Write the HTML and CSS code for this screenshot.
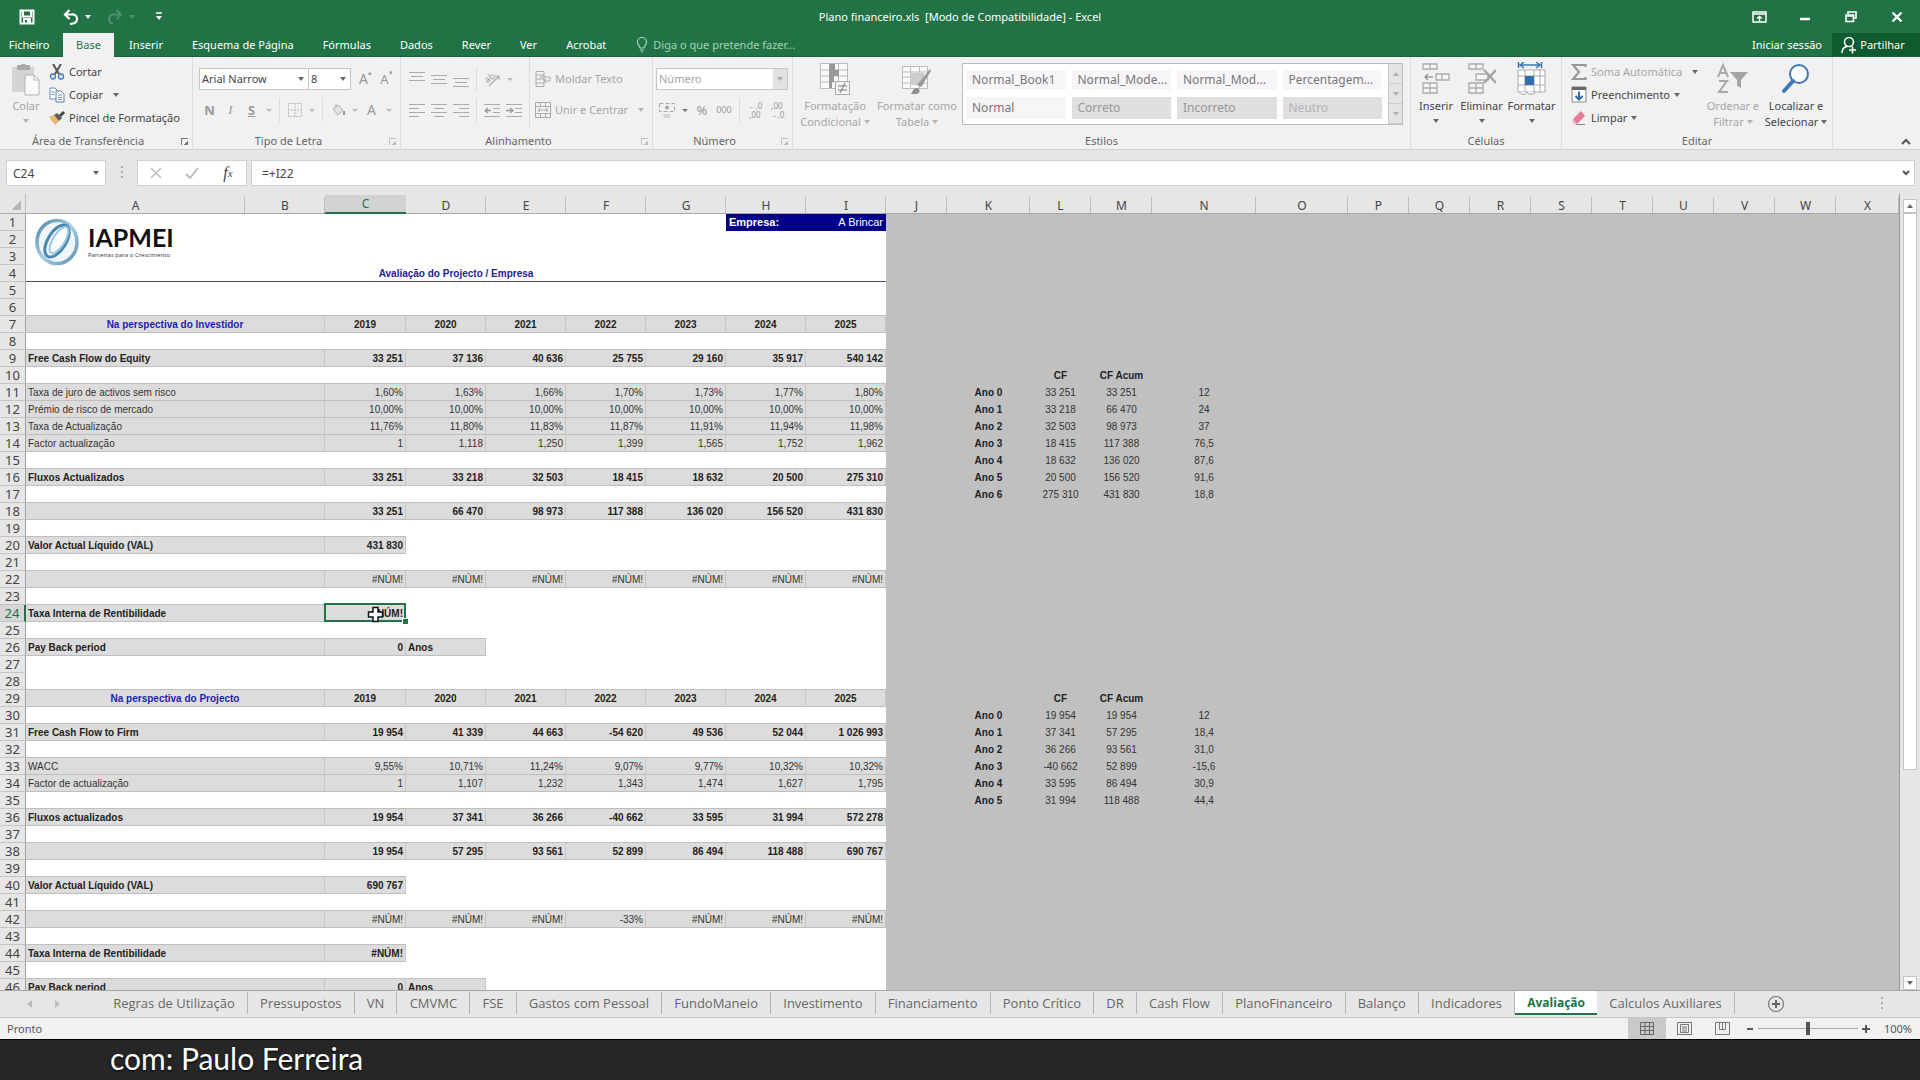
FILE: index.html
```html
<!DOCTYPE html>
<html lang="pt">
<head>
<meta charset="utf-8">
<title>Plano financeiro.xls - Excel</title>
<link rel="stylesheet" href="styles.css">
</head>
<body>
<header class="top">
  <div class="titlebar">
    <div class="quick">
      <button class="q-save" aria-label="Guardar"><svg width="16" height="16" viewBox="0 0 16 16"><path d="M1.500 1.500h13v13h-13z M4 1.500v6h8v-6 M5 14v-4h6v4" fill="none" stroke="#fff" stroke-width="2"/><path d="M8 11h2v3H8z" fill="#fff"/></svg></button>
      <button class="q-undo" aria-label="Anular"><svg width="16" height="16" viewBox="0 0 16 16"><path d="M2 5.500h7a4.500 4.500 0 0 1 1 9l-3 .5M6.500 1L2 5.500l4.500 4.500" fill="none" stroke="#fff" stroke-width="2.200"/></svg><i class="ar"></i></button>
      <button class="q-redo" aria-label="Refazer"><svg width="16" height="16" viewBox="0 0 16 16"><path d="M14 5.500H7a4.500 4.500 0 0 0-1 9M9.500 1L14 5.500 9.500 10" fill="none" stroke="#fff" stroke-width="2"/></svg><i class="ar"></i></button>
      <button class="q-more" aria-label="Personalizar"><svg width="8" height="9" viewBox="0 0 8 9"><path d="M1 1h6" stroke="#fff" stroke-width="1.500"/><path d="M1 4h6L4 8z" fill="#fff"/></svg></button>
    </div>
    <h1>Plano financeiro.xls&nbsp; [Modo de Compatibilidade] - Excel</h1>
    <div class="winctl">
      <button aria-label="Opções do friso"><svg width="15" height="12" viewBox="0 0 15 12"><path d="M1 1h13v10H1z M1 3h13 M7.500 10V5.500 M5 7.500l2.500-2 2.500 2" fill="none" stroke="#fff" stroke-width="1.500"/></svg></button>
      <button aria-label="Minimizar"><svg width="10" height="12" viewBox="0 0 10 12"><path d="M0 8h10" stroke="#fff" stroke-width="2.500"/></svg></button>
      <button aria-label="Restaurar"><svg width="12" height="12" viewBox="0 0 12 12"><path d="M3 3V1h8v6H9 M1 4h7.500v6.500H1z M1 5h7" fill="none" stroke="#fff" stroke-width="1.600"/></svg></button>
      <button aria-label="Fechar"><svg width="12" height="12" viewBox="0 0 12 12"><path d="M1.500 1.500l9 9M10.500 1.500l-9 9" stroke="#fff" stroke-width="2.400"/></svg></button>
    </div>
  </div>
  <nav class="rtabs">
    <button class="file">Ficheiro</button><button class="on">Base</button><button>Inserir</button><button>Esquema de Página</button><button>Fórmulas</button><button>Dados</button><button>Rever</button><button>Ver</button><button>Acrobat</button>
    <button class="tell"><svg width="12" height="16" viewBox="0 0 12 16"><path d="M4 11C4 9 1.500 8 1.500 5a4.500 4.500 0 0 1 9 0c0 3-2.500 4-2.500 6z M4 13h4 M5 15h2" fill="none" stroke="#9fd5b5" stroke-width="1.200"/></svg>Diga o que pretende fazer...</button>
    <a class="signin" href="#">Iniciar sessão</a>
    <button class="share"><svg width="16" height="18" viewBox="0 0 16 18"><circle cx="8" cy="6" r="4.500" fill="none" stroke="#fff" stroke-width="1.600"/><path d="M1 17c0-4 2-6 5-6.500 M8 14h7 M11.500 10.500v7" fill="none" stroke="#fff" stroke-width="1.600"/></svg>Partilhar</button>
  </nav>
</header>

<section class="ribbon">
  <div class="group g-clip">
    <div class="body">
      <button class="big dim"><svg width="30" height="34" viewBox="0 0 30 34"><path d="M1 5h22v25H1z" fill="#d4d4d4"/><path d="M6 3h4a3 3 0 0 1 5 0h4v5H6z" fill="#a9a9a9"/><path d="M14 13h9l5 5v15H14z" fill="#fafafa" stroke="#b5b5b5"/><path d="M23 13v5h5" fill="none" stroke="#b5b5b5"/></svg><span>Colar</span><i class="ar"></i></button>
      <div class="stack">
        <button class="row"><svg width="16" height="16" viewBox="0 0 16 16"><path d="M4 0l6 10M12 0L6 10" stroke="#555" stroke-width="2"/><circle cx="4" cy="12.500" r="2.500" fill="none" stroke="#3f77b5" stroke-width="1.300"/><circle cx="12" cy="12.500" r="2.500" fill="none" stroke="#3f77b5" stroke-width="1.300"/></svg>Cortar</button>
        <button class="row"><svg width="16" height="16" viewBox="0 0 16 16"><path d="M1 1h5l2 2v9H1z M2.500 5h3 M2.500 7.500h3" fill="#fff" stroke="#6e8fb5"/><path d="M7 4h5l3 3v8H7z" fill="#fff" stroke="#5580b0"/><path d="M9 8h4M9 10.500h4M9 12.500h4" stroke="#6e8fb5"/></svg>Copiar<i class="ar far"></i></button>
        <button class="row"><svg width="16" height="16" viewBox="0 0 16 16"><path d="M0 7l6 8 4-4-5-6z" fill="#ebb965"/><path d="M5 5l3-2 5 5-3 3z" fill="#5b5b5b"/><path d="M10 5l4-4 2 2-4 4z" fill="#444"/></svg>Pincel de Formatação</button>
      </div>
    </div>
    <div class="foot">Área de Transferência<i class="launch"></i></div>
  </div>

  <div class="group g-font">
    <div class="body two">
      <div class="line">
        <label class="drop w110"><select aria-label="Tipo de letra"><option>Arial Narrow</option></select></label>
        <label class="drop w42"><select aria-label="Tamanho"><option>8</option></select></label>
        <button class="ib first big-a" aria-label="Aumentar">A<sup>▴</sup></button><button class="ib" aria-label="Diminuir">A<sup>▾</sup></button>
      </div>
      <div class="line">
        <button class="ib"><b>N</b></button><button class="ib"><i class="ser">I</i></button><button class="ib"><b><u>S</u></b></button><i class="da"></i><i class="vs"></i>
        <button class="ib" aria-label="Limites"><svg width="14" height="14" viewBox="0 0 14 14"><path d="M.5.500h13v13H.5z M7 0v14 M0 7h14" fill="none" stroke="#bbb" stroke-dasharray="2 1"/></svg></button><i class="da"></i><i class="vs"></i>
        <button class="ib" aria-label="Cor de preenchimento"><svg width="16" height="14" viewBox="0 0 16 14"><path d="M3 6l5-4 5 5-5 5z M6 4V1" fill="#e4e4e4" stroke="#aaa"/><path d="M14 8v4" stroke="#999" stroke-width="2"/></svg></button><i class="da"></i><button class="ib big-a">A</button><i class="da"></i>
      </div>
    </div>
    <div class="foot">Tipo de Letra<i class="launch off"></i></div>
  </div>

  <div class="group g-align">
    <div class="body">
      <div class="two al">
        <div class="line">
          <button class="ib" aria-label="Cima"><svg width="16" height="16" viewBox="0 0 16 16"><path d="M0 1.500h16M2 5.500h12M0 9.500h16" stroke="#aaa"/></svg></button><button class="ib" aria-label="Meio"><svg width="16" height="16" viewBox="0 0 16 16"><path d="M0 4.500h16M2 8.500h12M0 12.500h16" stroke="#aaa"/></svg></button><button class="ib" aria-label="Baixo"><svg width="16" height="16" viewBox="0 0 16 16"><path d="M0 7.500h16M2 11.500h12M0 15.500h16" stroke="#aaa"/></svg></button><i class="vs"></i>
          <button class="ib" aria-label="Orientação"><svg width="20" height="20" viewBox="0 0 20 20"><path d="M7 17L17 7M17 7v4M17 7h-4" fill="none" stroke="#aaa" stroke-width="1.200"/><text x="3" y="12" font-size="9" fill="#999" transform="rotate(-35 8 10)">ab</text></svg></button><i class="da"></i>
        </div>
        <div class="line">
          <button class="ib" aria-label="Esquerda"><svg width="16" height="14" viewBox="0 0 16 14"><path d="M0 1.500h16M0 5.500h10M0 9.500h16M0 13.500h10" stroke="#aaa"/></svg></button><button class="ib" aria-label="Centro"><svg width="16" height="14" viewBox="0 0 16 14"><path d="M0 1.500h16M3 5.500h10M0 9.500h16M3 13.500h10" stroke="#aaa"/></svg></button><button class="ib" aria-label="Direita"><svg width="16" height="14" viewBox="0 0 16 14"><path d="M0 1.500h16M6 5.500h10M0 9.500h16M6 13.500h10" stroke="#aaa"/></svg></button><i class="vs"></i>
          <button class="ib" aria-label="Diminuir avanço"><svg width="16" height="14" viewBox="0 0 16 14"><path d="M0 1.500h16M9 5.500h7M9 9.500h7M0 13.500h16" stroke="#aaa"/><path d="M7 7.500H1M4 5L1 7.500 4 10" fill="none" stroke="#999" stroke-width="1.400"/></svg></button><button class="ib" aria-label="Aumentar avanço"><svg width="16" height="14" viewBox="0 0 16 14"><path d="M0 1.500h16M9 5.500h7M9 9.500h7M0 13.500h16" stroke="#aaa"/><path d="M0 7.500h6M4 5l3 2.500L4 10" fill="none" stroke="#999" stroke-width="1.400"/></svg></button>
        </div>
      </div>
      <div class="two wrap">
        <button class="line dim"><svg width="16" height="17" viewBox="0 0 16 17"><path d="M1 .5h8v15H1z M1 4h8M1 8h8M1 12h8" fill="none" stroke="#aaa"/><path d="M5 6h10v4H9M11 8l-2 2 2 2" fill="none" stroke="#aaa"/></svg>Moldar Texto</button>
        <button class="line dim"><svg width="16" height="16" viewBox="0 0 16 16"><path d="M.5.500h15v15H.5z M0 4.500h16M0 11.500h16M5.500 0v4M10.500 0v4M5.500 12v4M10.500 12v4M3 8h10M5 6L3 8l2 2M11 6l2 2-2 2" fill="none" stroke="#aaa"/></svg>Unir e Centrar<i class="ar far"></i></button>
      </div>
    </div>
    <div class="foot">Alinhamento<i class="launch off"></i></div>
  </div>

  <div class="group g-num">
    <div class="body two">
      <div class="line"><label class="drop w132 dim"><select aria-label="Formato de número"><option>Número</option></select></label></div>
      <div class="line">
        <button class="ib" aria-label="Moeda"><svg width="17" height="15" viewBox="0 0 17 15"><path d="M.5.500h15v8H.5z" fill="none" stroke="#aaa" stroke-dasharray="4 2"/><circle cx="8" cy="4.500" r="2" fill="#aaa"/><path d="M4 12h8M5 14h6" stroke="#ccc" stroke-width="1.500"/></svg></button><i class="da dk"></i><button class="ib pct">%</button><button class="ib ths">000</button><i class="vs"></i>
        <button class="ib dec" aria-label="Mais casas">←,0<br>,00</button><button class="ib dec" aria-label="Menos casas">,00<br>→,0</button>
      </div>
    </div>
    <div class="foot">Número<i class="launch off"></i></div>
  </div>

  <div class="group g-style">
    <div class="body">
      <button class="big dim"><svg width="30" height="32" viewBox="0 0 30 32"><path d="M.5.500h27v25H.5z M9.500 0v26M18.500 0v26M0 7h28M0 13h28M0 19h28" fill="#fafafa" stroke="#bbb"/><path d="M9 1h6v6H9zM9 7h10v6H9zM9 13h5v6H9zM9 19h3v6H9z" fill="#999"/><path d="M15.500 18.500h14v13h-14z" fill="#f4f4f4" stroke="#aaa"/><path d="M18 23h9M18 27h9M25 20l-5 10" stroke="#777"/></svg><span>Formatação<br>Condicional <i class="ar"></i></span></button>
      <button class="big dim"><svg width="30" height="32" viewBox="0 0 30 32"><path d="M.5 3.500h25v22H.5z M8.500 3v23M17.500 3v23M0 9h26M0 14h26M0 20h26" fill="#fafafa" stroke="#bbb"/><path d="M8 10h14v12H8z" fill="#ccc"/><path d="M29 8l-10 16-4-2L28 6z" fill="#999"/><path d="M8 31c3 0 2-6 7-6 4 1 3 5 0 6z" fill="#8d8d8d"/></svg><span>Formatar como<br>Tabela <i class="ar"></i></span></button>
      <div class="gallery">
        <button>Normal_Book1</button><button>Normal_Mode...</button><button>Normal_Mod...</button><button class="pc">Percentagem...</button>
        <button>Normal</button><button class="sh">Correto</button><button class="sh">Incorreto</button><button class="sh nt">Neutro</button>
        <div class="gscroll"><button aria-label="Acima"><i class="ar up"></i></button><button aria-label="Abaixo"><i class="ar"></i></button><button aria-label="Mais"><i class="ar"></i></button></div>
      </div>
    </div>
    <div class="foot">Estilos</div>
  </div>

  <div class="group g-cells">
    <div class="body">
      <button class="big"><svg width="28" height="32" viewBox="0 0 28 32"><path d="M1 1h14v5H1zM8 1v5M1 20h14v10H1zM8 20v10M1 25h14M14 11h13v6H14zM20 11v6" fill="#f7f7f7" stroke="#aaa" stroke-width="1.300"/><path d="M11 14H3M6 11l-3 3 3 3" fill="none" stroke="#999" stroke-width="1.500"/></svg><span>Inserir</span><i class="ar"></i></button>
      <button class="big"><svg width="28" height="32" viewBox="0 0 28 32"><path d="M1 1h14v5H1zM8 1v5M1 20h14v10H1zM8 20v10M1 25h14M8 11h12v6H8z" fill="#f7f7f7" stroke="#aaa" stroke-width="1.300"/><path d="M16 7l12 13M28 7L16 20" stroke="#a5a5a5" stroke-width="2.500"/></svg><span>Eliminar</span><i class="ar"></i></button>
      <button class="big"><svg width="30" height="34" viewBox="0 0 30 34"><path d="M1.500 0v6M24.500 0v6M3 3h20M7 0L3 3l4 3M19 0l4 3-4 3" fill="none" stroke="#3f77b5" stroke-width="1.500"/><path d="M1 8h27v22H1zM1 14h27M1 23h27M8 8v22M17 8v22M23 8v22" fill="#fff" stroke="#aaa"/><path d="M8 14h9v9H8z" fill="#2f6fb0"/><path d="M3 30c1 3 6 3 7 0 1 3 7 3 8 0" fill="#fff" stroke="#999"/></svg><span>Formatar</span><i class="ar"></i></button>
    </div>
    <div class="foot">Células</div>
  </div>

  <div class="group g-edit">
    <div class="body">
      <div class="stack">
        <button class="row dim"><svg width="16" height="18" viewBox="0 0 16 18"><path d="M14.500 4V2H2l6 7-6 7h12.500v-2" fill="none" stroke="#999" stroke-width="2.200"/></svg>Soma Automática<i class="ar far dk"></i></button>
        <button class="row"><svg width="16" height="17" viewBox="0 0 16 17"><path d="M1 1h14v15H1z" fill="#fff" stroke="#888"/><path d="M1 1h14v3H1z" fill="#666"/><path d="M8 5.500v8M4.500 10L8 13.500 11.500 10" fill="none" stroke="#2f6fb0" stroke-width="2"/></svg>Preenchimento<i class="ar"></i></button>
        <button class="row"><svg width="16" height="16" viewBox="0 0 16 16"><path d="M2 9l8-8 4 5-8 8z" fill="#e27d94"/><path d="M2 9l4 5-2 1-3-3z" fill="#f3b7c3"/><path d="M5 14.500h9" stroke="#888"/></svg>Limpar<i class="ar"></i></button>
      </div>
      <button class="big dim"><svg width="32" height="32" viewBox="0 0 32 32"><path d="M1 14L6 2l5 12M3 10h6M2 18h8L2 29h9" fill="none" stroke="#a9a9a9" stroke-width="2"/><path d="M13 9h18l-7 8v8l-4-2v-6z" fill="#a5a5a5"/></svg><span>Ordenar e<br>Filtrar <i class="ar"></i></span></button>
      <button class="big"><svg width="30" height="32" viewBox="0 0 30 32"><circle cx="18" cy="11" r="9" fill="#fafafa" stroke="#3f77b5" stroke-width="2"/><path d="M12 18L3 28" stroke="#3f77b5" stroke-width="4" stroke-linecap="round"/></svg><span>Localizar e<br>Selecionar <i class="ar"></i></span></button>
    </div>
    <div class="foot">Editar</div>
  </div>
  <button class="collapse" aria-label="Fechar o friso"><svg width="10" height="7" viewBox="0 0 10 7"><path d="M1 6l4-4 4 4" fill="none" stroke="#555" stroke-width="2"/></svg></button>
</section>

<section class="formula">
  <div class="namebox"><input type="text" value="C24" aria-label="Caixa de nome"><i class="ar"></i></div>
  <i class="dots"></i>
  <div class="fx">
    <button aria-label="Cancelar"><svg width="12" height="12" viewBox="0 0 12 12"><path d="M1 1l10 10M11 1L1 11" stroke="#bdbdbd" stroke-width="1.500"/></svg></button>
    <button aria-label="Introduzir"><svg width="14" height="12" viewBox="0 0 14 12"><path d="M1 7l4 4 8-10" fill="none" stroke="#bdbdbd" stroke-width="2"/></svg></button>
    <button class="fn" aria-label="Inserir função">f<small>x</small></button>
  </div>
  <div class="fbox"><input type="text" value="=+I22" aria-label="Barra de fórmulas"><svg width="8" height="6" viewBox="0 0 8 6"><path d="M1 1l3 3 3-3" fill="none" stroke="#555" stroke-width="2"/></svg></div>
</section>

<main class="sheetarea">
<div class="sheet">
<table>
<colgroup><col class="c-h"><col class="c-a"><col class="c-b"><col class="c-c"><col class="c-b"><col class="c-b"><col class="c-b"><col class="c-b"><col class="c-b"><col class="c-b"><col class="c-j"><col class="c-k"><col class="c-j"><col class="c-j"><col class="c-n"><col class="c-o"><col class="c-j"><col class="c-j"><col class="c-j"><col class="c-j"><col class="c-j"><col class="c-j"><col class="c-j"><col class="c-j"><col></colgroup>
<thead><tr><th class="corner"></th><th>A</th><th>B</th><th class="sel">C</th><th>D</th><th>E</th><th>F</th><th>G</th><th>H</th><th>I</th><th>J</th><th>K</th><th>L</th><th>M</th><th>N</th><th>O</th><th>P</th><th>Q</th><th>R</th><th>S</th><th>T</th><th>U</th><th>V</th><th>W</th><th>X</th></tr></thead>
<tbody>
<tr><th>1</th><td colspan="7" class="anchor"><div class="logo"><svg width="44" height="48" viewBox="0 0 44 48"><defs><linearGradient id="ring" x1="0" y1="0" x2="1" y2="1"><stop offset="0" stop-color="#4f88ad"/><stop offset=".5" stop-color="#a9cfe3"/><stop offset="1" stop-color="#5b8fb0"/></linearGradient></defs><ellipse cx="22" cy="24" rx="20" ry="21.500" fill="#eef6fa" stroke="url(#ring)" stroke-width="3.500"/><ellipse cx="22" cy="23" rx="9" ry="18" transform="rotate(32 22 23)" fill="#f7fbfd" stroke="#4b87b0" stroke-width="3"/><ellipse cx="24" cy="22" rx="6" ry="15" transform="rotate(32 24 22)" fill="none" stroke="#9cc7de" stroke-width="2"/></svg><p><strong>IAPMEI</strong><small>Parcerias para o Crescimento</small></p></div></td><td class="navy">Empresa:</td><td class="navy num">A Brincar</td><td class="o" colspan="15"></td></tr>
<tr><th>2</th><td colspan="9"></td><td class="o" colspan="15"></td></tr>
<tr><th>3</th><td colspan="9"></td><td class="o" colspan="15"></td></tr>
<tr><th>4</th><td colspan="9" class="title">Avaliação do Projecto / Empresa</td><td class="o" colspan="15"></td></tr>
<tr><th>5</th><td colspan="9"></td><td class="o" colspan="15"></td></tr>
<tr><th>6</th><td colspan="9"></td><td class="o" colspan="15"></td></tr>
<tr class="f yr"><th>7</th><td colspan="2">Na perspectiva do Investidor</td><td>2019</td><td>2020</td><td>2021</td><td>2022</td><td>2023</td><td>2024</td><td>2025</td><td class="o" colspan="15"></td></tr>
<tr><th>8</th><td colspan="9"></td><td class="o" colspan="15"></td></tr>
<tr class="f b"><th>9</th><td colspan="2">Free Cash Flow do Equity</td><td>33 251</td><td>37 136</td><td>40 636</td><td>25 755</td><td>29 160</td><td>35 917</td><td>540 142</td><td class="o" colspan="15"></td></tr>
<tr><th>10</th><td colspan="9"></td><td class="o"></td><td class="o"></td><td class="o k">CF</td><td class="o k">CF Acum</td><td class="o" colspan="11"></td></tr>
<tr class="f"><th>11</th><td colspan="2">Taxa de juro de activos sem risco</td><td>1,60%</td><td>1,63%</td><td>1,66%</td><td>1,70%</td><td>1,73%</td><td>1,77%</td><td>1,80%</td><td class="o"></td><td class="o k">Ano 0</td><td class="o">33 251</td><td class="o">33 251</td><td class="o">12</td><td class="o" colspan="10"></td></tr>
<tr class="f"><th>12</th><td colspan="2">Prémio de risco de mercado</td><td>10,00%</td><td>10,00%</td><td>10,00%</td><td>10,00%</td><td>10,00%</td><td>10,00%</td><td>10,00%</td><td class="o"></td><td class="o k">Ano 1</td><td class="o">33 218</td><td class="o">66 470</td><td class="o">24</td><td class="o" colspan="10"></td></tr>
<tr class="f"><th>13</th><td colspan="2">Taxa de Actualização</td><td>11,76%</td><td>11,80%</td><td>11,83%</td><td>11,87%</td><td>11,91%</td><td>11,94%</td><td>11,98%</td><td class="o"></td><td class="o k">Ano 2</td><td class="o">32 503</td><td class="o">98 973</td><td class="o">37</td><td class="o" colspan="10"></td></tr>
<tr class="f"><th>14</th><td colspan="2">Factor actualização</td><td>1</td><td>1,118</td><td>1,250</td><td>1,399</td><td>1,565</td><td>1,752</td><td>1,962</td><td class="o"></td><td class="o k">Ano 3</td><td class="o">18 415</td><td class="o">117 388</td><td class="o">76,5</td><td class="o" colspan="10"></td></tr>
<tr><th>15</th><td colspan="9"></td><td class="o"></td><td class="o k">Ano 4</td><td class="o">18 632</td><td class="o">136 020</td><td class="o">87,6</td><td class="o" colspan="10"></td></tr>
<tr class="f b"><th>16</th><td colspan="2">Fluxos Actualizados</td><td>33 251</td><td>33 218</td><td>32 503</td><td>18 415</td><td>18 632</td><td>20 500</td><td>275 310</td><td class="o"></td><td class="o k">Ano 5</td><td class="o">20 500</td><td class="o">156 520</td><td class="o">91,6</td><td class="o" colspan="10"></td></tr>
<tr><th>17</th><td colspan="9"></td><td class="o"></td><td class="o k">Ano 6</td><td class="o">275 310</td><td class="o">431 830</td><td class="o">18,8</td><td class="o" colspan="10"></td></tr>
<tr class="f b"><th>18</th><td colspan="2"></td><td>33 251</td><td>66 470</td><td>98 973</td><td>117 388</td><td>136 020</td><td>156 520</td><td>431 830</td><td class="o" colspan="15"></td></tr>
<tr><th>19</th><td colspan="9"></td><td class="o" colspan="15"></td></tr>
<tr class="f b"><th>20</th><td colspan="2">Valor Actual Líquido (VAL)</td><td>431 830</td><td class="w" colspan="6"></td><td class="o" colspan="15"></td></tr>
<tr><th>21</th><td colspan="9"></td><td class="o" colspan="15"></td></tr>
<tr class="f"><th>22</th><td colspan="2"></td><td>#NÚM!</td><td>#NÚM!</td><td>#NÚM!</td><td>#NÚM!</td><td>#NÚM!</td><td>#NÚM!</td><td>#NÚM!</td><td class="o" colspan="15"></td></tr>
<tr><th>23</th><td colspan="9"></td><td class="o" colspan="15"></td></tr>
<tr class="f b"><th class="sel">24</th><td colspan="2">Taxa Interna de Rentibilidade</td><td class="cur">#NÚM!<svg class="pointer" width="17" height="17" viewBox="0 0 17 17"><path d="M6 1.500h5V6h4.500v5H11v4.500H6V11H1.500V6H6z" fill="#fff" stroke="#111" stroke-width="1.500"/></svg></td><td class="w" colspan="6"></td><td class="o" colspan="15"></td></tr>
<tr><th>25</th><td colspan="9"></td><td class="o" colspan="15"></td></tr>
<tr class="f b"><th>26</th><td colspan="2">Pay Back period</td><td>0</td><td class="l">Anos</td><td class="w" colspan="5"></td><td class="o" colspan="15"></td></tr>
<tr><th>27</th><td colspan="9"></td><td class="o" colspan="15"></td></tr>
<tr><th>28</th><td colspan="9"></td><td class="o" colspan="15"></td></tr>
<tr class="f yr"><th>29</th><td colspan="2">Na perspectiva do Projecto</td><td>2019</td><td>2020</td><td>2021</td><td>2022</td><td>2023</td><td>2024</td><td>2025</td><td class="o"></td><td class="o"></td><td class="o k">CF</td><td class="o k">CF Acum</td><td class="o" colspan="11"></td></tr>
<tr><th>30</th><td colspan="9"></td><td class="o"></td><td class="o k">Ano 0</td><td class="o">19 954</td><td class="o">19 954</td><td class="o">12</td><td class="o" colspan="10"></td></tr>
<tr class="f b"><th>31</th><td colspan="2">Free Cash Flow to Firm</td><td>19 954</td><td>41 339</td><td>44 663</td><td>-54 620</td><td>49 536</td><td>52 044</td><td>1 026 993</td><td class="o"></td><td class="o k">Ano 1</td><td class="o">37 341</td><td class="o">57 295</td><td class="o">18,4</td><td class="o" colspan="10"></td></tr>
<tr><th>32</th><td colspan="9"></td><td class="o"></td><td class="o k">Ano 2</td><td class="o">36 266</td><td class="o">93 561</td><td class="o">31,0</td><td class="o" colspan="10"></td></tr>
<tr class="f"><th>33</th><td colspan="2">WACC</td><td>9,55%</td><td>10,71%</td><td>11,24%</td><td>9,07%</td><td>9,77%</td><td>10,32%</td><td>10,32%</td><td class="o"></td><td class="o k">Ano 3</td><td class="o">-40 662</td><td class="o">52 899</td><td class="o">-15,6</td><td class="o" colspan="10"></td></tr>
<tr class="f"><th>34</th><td colspan="2">Factor de actualização</td><td>1</td><td>1,107</td><td>1,232</td><td>1,343</td><td>1,474</td><td>1,627</td><td>1,795</td><td class="o"></td><td class="o k">Ano 4</td><td class="o">33 595</td><td class="o">86 494</td><td class="o">30,9</td><td class="o" colspan="10"></td></tr>
<tr><th>35</th><td colspan="9"></td><td class="o"></td><td class="o k">Ano 5</td><td class="o">31 994</td><td class="o">118 488</td><td class="o">44,4</td><td class="o" colspan="10"></td></tr>
<tr class="f b"><th>36</th><td colspan="2">Fluxos actualizados</td><td>19 954</td><td>37 341</td><td>36 266</td><td>-40 662</td><td>33 595</td><td>31 994</td><td>572 278</td><td class="o" colspan="15"></td></tr>
<tr><th>37</th><td colspan="9"></td><td class="o" colspan="15"></td></tr>
<tr class="f b"><th>38</th><td colspan="2"></td><td>19 954</td><td>57 295</td><td>93 561</td><td>52 899</td><td>86 494</td><td>118 488</td><td>690 767</td><td class="o" colspan="15"></td></tr>
<tr><th>39</th><td colspan="9"></td><td class="o" colspan="15"></td></tr>
<tr class="f b"><th>40</th><td colspan="2">Valor Actual Líquido (VAL)</td><td>690 767</td><td class="w" colspan="6"></td><td class="o" colspan="15"></td></tr>
<tr><th>41</th><td colspan="9"></td><td class="o" colspan="15"></td></tr>
<tr class="f"><th>42</th><td colspan="2"></td><td>#NÚM!</td><td>#NÚM!</td><td>#NÚM!</td><td>-33%</td><td>#NÚM!</td><td>#NÚM!</td><td>#NÚM!</td><td class="o" colspan="15"></td></tr>
<tr><th>43</th><td colspan="9"></td><td class="o" colspan="15"></td></tr>
<tr class="f b"><th>44</th><td colspan="2">Taxa Interna de Rentibilidade</td><td>#NÚM!</td><td class="w" colspan="6"></td><td class="o" colspan="15"></td></tr>
<tr><th>45</th><td colspan="9"></td><td class="o" colspan="15"></td></tr>
<tr class="f b"><th>46</th><td colspan="2">Pay Back period</td><td>0</td><td class="l">Anos</td><td class="w" colspan="5"></td><td class="o" colspan="15"></td></tr>
</tbody>
</table>
</div>
<div class="vscroll"><button aria-label="Subir"><i class="ar up"></i></button><div class="track"><div class="thumb"></div></div><button aria-label="Descer"><i class="ar"></i></button></div>
</main>

<nav class="stabs">
  <div class="arrows"><button aria-label="Anterior"><i class="ar left"></i></button><button aria-label="Seguinte"><i class="ar right"></i></button></div>
  <div class="list"><button>Regras de Utilização</button><button>Pressupostos</button><button>VN</button><button>CMVMC</button><button>FSE</button><button>Gastos com Pessoal</button><button>FundoManeio</button><button>Investimento</button><button>Financiamento</button><button>Ponto Crítico</button><button>DR</button><button>Cash Flow</button><button>PlanoFinanceiro</button><button>Balanço</button><button>Indicadores</button><button class="on">Avaliação</button><button>Calculos Auxiliares</button></div>
  <button class="add" aria-label="Nova folha"><svg width="18" height="18" viewBox="0 0 18 18"><circle cx="9" cy="9" r="7.500" fill="none" stroke="#777" stroke-width="1.200"/><path d="M9 5v8M5 9h8" stroke="#666" stroke-width="2"/></svg></button>
  <i class="dots"></i>
</nav>

<footer class="status">
  <span>Pronto</span>
  <div class="views">
    <button class="on" aria-label="Normal"><svg width="14" height="13" viewBox="0 0 14 13"><path d="M.5.500h13v12H.5zM5 0v13M9.500 0v13M0 4.500h14M0 8.500h14" fill="none" stroke="#666"/></svg></button>
    <button aria-label="Esquema de página"><svg width="15" height="13" viewBox="0 0 15 13"><path d="M.5.500h14v12H.5zM3.500 2.500h8v8h-8zM5 5h5M5 7h5M5 9h5" fill="none" stroke="#777"/></svg></button>
    <button aria-label="Quebras de página"><svg width="15" height="13" viewBox="0 0 15 13"><path d="M.5.500h14v12H.5zM4.500 0v7.500h6V0M7.500 0v7" fill="none" stroke="#777"/></svg></button>
  </div>
  <div class="zoom"><button aria-label="Reduzir"><svg width="6" height="8" viewBox="0 0 6 8"><path d="M0 4h6" stroke="#555" stroke-width="2"/></svg></button><input type="range" min="0" max="100" value="50" aria-label="Zoom"><button aria-label="Ampliar"><svg width="8" height="8" viewBox="0 0 8 8"><path d="M0 4h8M4 0v8" stroke="#555" stroke-width="2"/></svg></button></div>
  <span class="pc">100%</span>
</footer>
<div class="caption">com: Paulo Ferreira</div>
</body>
</html>
```
FILE: styles.css
```css
*{box-sizing:border-box}
html,body{margin:0;height:100%}
body{display:flex;flex-direction:column;height:100vh;overflow:hidden;background:#262626;color:#444;font:11px/16px "Noto Sans","Open Sans",sans-serif}
button{display:flex;align-items:center;justify-content:center;margin:0;padding:0;border:0;background:none;color:inherit;font:inherit;white-space:nowrap}
input,select{margin:0;border:0;outline:0;background:none;color:inherit;font:inherit;min-width:0}
svg{flex:none;display:block}
h1,p{margin:0}

/* small drop-down triangle */
.ar{display:inline-block;flex:none;width:0;height:0;border:3px solid transparent;border-top:4px solid #666;border-bottom:0}
.ar.up{border-top:0;border-bottom:4px solid #666}
.ar.left{border:4px solid transparent;border-right:5px solid #bbb;border-left:0}
.ar.right{border:4px solid transparent;border-left:5px solid #bbb;border-right:0}
.dots{width:2px;height:14px;background:repeating-linear-gradient(#aaa 0 2px,transparent 2px 5px)}

.top{flex:none;background:#217346;color:#fff}
.titlebar{display:grid;grid-template-columns:1fr auto 1fr;align-items:center;height:33px}
.titlebar h1{font-size:11px;font-weight:400}
.quick{display:flex;align-items:center;padding-left:19px}
.quick .ar{border-top-color:#fff}
.q-undo{margin-left:28px;gap:6px}
.q-redo{margin-left:16px;gap:6px;opacity:.2}
.q-more{margin-left:20px}
.winctl{display:flex;justify-content:flex-end}
.winctl button{width:46px}
.rtabs{display:flex;height:24px;border-bottom:1px solid #1b6339}
.rtabs button{padding:0 14px 0 15px}
.rtabs .file{width:63px;padding:0 5px 0 0}
.rtabs .on{width:51px;padding:0;height:24px;background:#f1f1f1;color:#217346}
.rtabs .tell{padding:0 14px 0 16px;gap:5px;color:#a3d3b6}
.signin{margin-left:auto;padding-right:10px;color:#fff;line-height:23px;text-decoration:none}
.rtabs .share{width:88px;padding:0 6px 0 0;gap:3px;background:#0f5a2e}

.ribbon{flex:none;display:flex;height:93px;background:#f1f1f1;border-bottom:1px solid #d0d0d0}
.group{display:flex;flex-direction:column;flex:none;border-right:1px solid #dcdcdc}
.group .body{display:flex;height:76px}
.foot{position:relative;height:16px;text-align:center;color:#666}
.launch{position:absolute;right:4px;top:5px;width:7px;height:7px;border-left:1px solid #777;border-top:1px solid #777}
.launch::after{content:"";position:absolute;right:0;bottom:0;width:4px;height:4px;background:linear-gradient(135deg,transparent 40%,#777 40%)}
.launch.off{opacity:.4}
.g-clip{width:193px}.g-font{width:208px}.g-align{width:252px}.g-num{width:140px}.g-style{width:618px}.g-cells{width:151px}.g-edit{width:271px}
.g-clip .foot{padding-right:16px}.g-font .foot{padding-right:16px}
.g-align .foot,.g-num .foot{padding-right:16px}
.big{flex-direction:column;justify-content:flex-start;text-align:center}
.big svg{margin:5px 0 2px;height:34px}
.big>.ar{margin-top:5px}
.big span .ar{margin-bottom:2px}
.dim{color:#a6a6a6}
.dim .ar{border-top-color:#b5b5b5}
.dim .ar.dk{border-top-color:#666}
.stack{padding-top:3px}
.stack .row{height:23px;gap:4px}
.far{margin-left:6px}
.g-clip .big{width:36px;margin:0 4px 0 8px}
.g-clip .stack{padding-left:1px}
.two{display:flex;flex-direction:column!important;gap:9px;padding-top:11px}
.line{display:flex;align-items:center;height:22px}
.drop{position:relative;display:block;height:22px;background:#fff;border:1px solid #c6c6c6}
.drop select{width:100%;height:20px;padding:0 2px;appearance:none}
.drop::after{content:"";position:absolute;right:4px;top:8px;border:3px solid transparent;border-top:4px solid #666;border-bottom:0}
.drop.dim::after{border-top-color:#aaa}
.w110{width:110px}.w42{width:43px;margin-left:-1px}.w132{width:132px}
.w132::before{content:"";position:absolute;right:0;top:0;width:14px;height:20px;background:#e1e1e1}
.g-font .two,.g-font .body{padding-left:6px}
.ib{width:21px;height:22px;color:#999;font-size:13px}
.ib sup{font-size:7px;line-height:10px;align-self:flex-start}
.ib.first{margin-left:4px}
.big-a{font-size:14px}
.ser{font-family:"Liberation Serif",serif}
.da{width:13px;display:flex;justify-content:center}
.da::after{content:"";border:3px solid transparent;border-top:3px solid #bbb;border-bottom:0}
.da.dk::after{border-top-color:#777}
.vs{width:1px;height:24px;margin:0 4px;background:#dcdcdc}
.al{width:128px;padding-left:5px}
.al .ib{width:22px}
.wrap{padding-left:5px;border-left:1px solid #dcdcdc;height:70px}
.wrap .line{gap:4px;justify-content:flex-start}
.g-num .two{padding-left:3px}
.g-num .ib{width:22px}
.ths{font-size:9px}
.ib.dec{font-size:8px;line-height:9px}
.g-style .big:first-child{width:84px}
.g-style .big:nth-child(2){width:80px}
.gallery{display:grid;grid-template-columns:repeat(4,1fr) 14px;grid-template-rows:20px 22px;gap:7px 6px;flex:1;height:62px;margin:6px 7px 0 5px;padding:6px 0 0 3px;background:#fff;border:1px solid #bbb;font-size:12px}
.gallery>button{justify-content:flex-start;padding-left:6px;background:#f7f5f7;color:#777}
.gallery .sh{background:#dfdfdf;color:#999}
.gallery .nt{color:#b5b0b5}
.gscroll{grid-column:5;grid-row:1/3;margin-top:-6px;height:60px;display:flex;flex-direction:column;background:#e4e4e4}
.gscroll button{flex:1;border-left:1px solid #ccc;border-bottom:1px solid #ccc}
.gscroll .ar{opacity:.4}
.g-cells .body{padding-left:3px}
.g-cells .big{width:44px}
.g-cells .big:nth-child(2){width:47px}
.g-cells .big:nth-child(3){width:53px}
.g-edit .body{padding-left:9px}
.g-edit .stack{width:132px}
.g-edit .big{width:60px}
.g-edit .big:last-child{width:66px}
.collapse{align-self:flex-end;width:16px;height:16px;margin:0 6px 0 auto}

.formula{flex:none;display:flex;align-items:center;height:44px;padding:2px 5px 0 6px;background:#e6e6e6;font-size:12px}
.namebox,.fx,.fbox{display:flex;align-items:center;height:26px;background:#fff;border:1px solid #d0d0d0}
.namebox{width:100px;padding:0 6px}
.namebox input{flex:1;height:24px;padding:0}
.namebox .ar,.fbox svg{flex:none}
.formula .dots{margin:0 14px 0 15px}
.fx{width:110px;margin-right:4px}
.fx button{flex:1}
.fn{font:italic 16px/20px "Liberation Serif",serif}
.fn small{font-size:11px;align-self:flex-end}
.fbox{flex:1;padding:0 4px 0 10px}
.fbox input{flex:1;height:24px;padding:0}

.sheetarea{flex:1;min-height:0;display:flex;background:#e6e6e6}
.sheet{flex:1;min-width:0;overflow:hidden;border-right:1px solid #999;background:#c0c0c0}
table{width:100%;table-layout:fixed;border-collapse:separate;border-spacing:0;background:#fff}
.c-h{width:26px}.c-a{width:219px}.c-b{width:80px}.c-c{width:81px}.c-j{width:61px}.c-k{width:83px}.c-n{width:104px}.c-o{width:92px}
th,td{height:17px;padding:0;font-weight:400;line-height:15px;white-space:nowrap;overflow:hidden}
thead th{height:20px;padding-top:3px;background:linear-gradient(#bdbdbd,#bdbdbd) right bottom/1px 16px no-repeat #e6e6e6;border-bottom:1px solid #a8a8a8;font-size:12px}
thead th.sel{padding-top:2px;line-height:16px;background:linear-gradient(#d2d2d2,#d2d2d2) bottom/100% 17px no-repeat #e6e6e6;border-bottom:2px solid #217346;color:#217346}
thead .corner{background:linear-gradient(135deg,transparent 50%,#b5b5b5 50%) 11px 6px/10px 10px no-repeat #e6e6e6;border-right:1px solid #bdbdbd}
tbody th{background:#e6e6e6;border-bottom:1px solid #c4c4c4;border-right:1px solid #a0a0a0;font-size:13px;color:#444}
tbody th.sel{background:#d6d6d6;color:#217346;border-right:2px solid #217346}
td{font-family:"Liberation Sans",Arial,sans-serif;font-size:10px;text-align:right;color:#333}
.f td{background:#dcdcdc;border-right:1px solid #c6c6c6;border-bottom:1px solid #bfbfbf;box-shadow:0 -1px #bfbfbf;padding:0 2px}
.f td:nth-child(2){text-align:left}
.b td,.yr td{font-weight:700;color:#222}
.yr td,.yr td:nth-child(2){text-align:center}
.yr td:nth-child(2){color:#1e1eb4}
.f td.w{background:#fff;border:0;box-shadow:none}
.f td.l{text-align:left}
td.o,.f td.o{background:#c0c0c0;border:0;box-shadow:none;text-align:center;font-weight:400;color:#333;padding:0}
td.o.k,.f td.o.k{font-weight:700;color:#222}
.title{text-align:center;font-weight:700;color:#24248f;border-bottom:1px solid #4a4a8c}
.navy{background:#00008b;color:#fff;font-size:11px;font-weight:700;text-align:left;padding:0 3px}
.navy.num{font-weight:400;text-align:right}
.anchor{position:relative;overflow:visible}
.logo{position:absolute;left:9px;top:4px;display:flex;gap:9px;text-align:left}
.logo p{padding-top:7px;color:#111}
.logo strong{display:block;font:700 25px/24px Lato,sans-serif}
.logo small{display:block;font:6px/12px "Open Sans",sans-serif;color:#333}
.cur{position:relative;overflow:visible}
.cur::before{content:"";position:absolute;inset:-2px -1px -1px -1px;border:2px solid #217346}
.cur::after{content:"";position:absolute;right:-3px;bottom:-3px;width:5px;height:5px;background:#217346;outline:1px solid #fff}
.pointer{position:absolute;left:42px;top:1px}

.vscroll{flex:none;width:20px;display:flex;flex-direction:column;align-items:center;padding-top:5px}
.vscroll button,.thumb{width:14px;background:#fff;border:1px solid #c4c4c4}
.vscroll button{height:14px}
.track{flex:1;display:flex}
.thumb{height:73%}

.stabs{flex:none;display:flex;align-items:center;height:28px;background:#e6e6e6;border-top:1px solid #a5a5a5;border-bottom:1px solid #c6c6c6;font:13px/18px "Open Sans",sans-serif;color:#666}
.arrows{display:flex;flex:none;width:101px;padding-left:15px}
.arrows button{width:28px}
.list{display:flex;flex:1;max-width:1634px;height:26px}
.list button{flex:1 1 auto;height:22px;margin-top:1px;border-right:1px solid #b5b5b5}
.list .on{height:24px;margin-top:0;padding-top:1px;background:#fff;border-right:0;border-bottom:2px solid #217346;color:#217346;font-weight:700;font-size:12px}
.add{margin-left:32px}
.stabs .dots{margin:0 37px 0 auto}

.status{flex:none;display:flex;align-items:center;height:21px;padding:0 8px 0 7px;background:#f1f1f1;color:#555}
.views{display:flex;height:21px;margin-left:auto}
.views button{width:38px}
.views .on{background:#c9c9c9}
.zoom{display:flex;align-items:center;gap:2px;padding-left:2px}
.zoom button{width:12px}
.zoom input{appearance:none;width:100px;height:16px;background:linear-gradient(#aaa,#aaa) center/100% 1px no-repeat}
.zoom input::-webkit-slider-thumb{appearance:none;width:4px;height:13px;background:#555}
.status .pc{margin-left:12px}
.caption{flex:none;height:41px;padding-left:110px;border-top:1px solid #000;color:#fff;font:30px/36px Lato,sans-serif;text-shadow:0 1px 2px #000}
```
